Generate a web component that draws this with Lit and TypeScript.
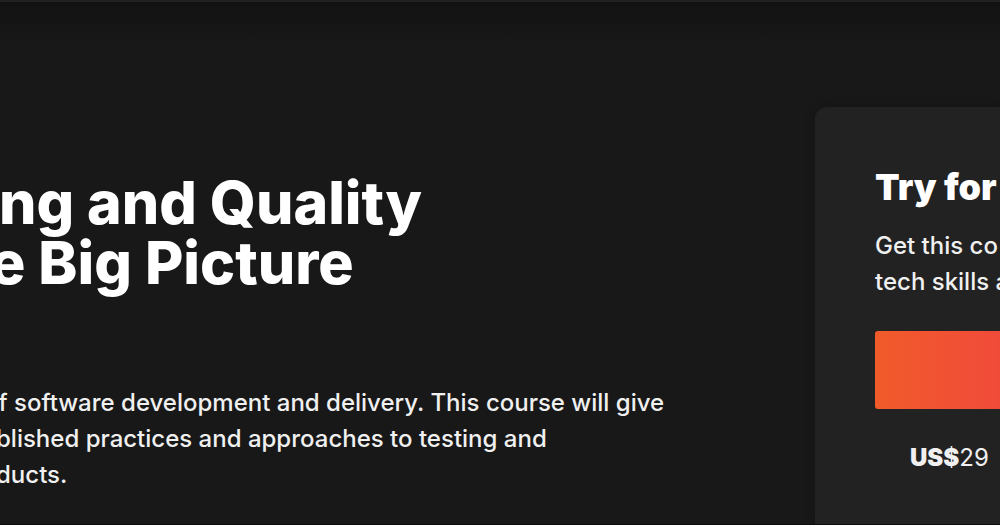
import { LitElement, html, css } from "lit";
import { customElement } from "lit/decorators.js";

@customElement("app-root")
export class AppRoot extends LitElement {
  static styles = css`
    :host {
      display: block;
      color: #f0f0f0;
      background: #181818;
      font-family: Inter, "Liberation Sans", sans-serif;
    }
    .page {
      box-sizing: border-box;
      min-height: 100vh;
      display: flex;
      justify-content: space-between;
      overflow: hidden;
      border-top: 2px solid #222;
      border-bottom: 1px solid #0c0c0c;
      background: linear-gradient(#121212, #181818 40px);
    }
    .intro {
      padding-top: 171px;
      white-space: nowrap;
    }
    h1 {
      margin: 0 0 92px -10px;
      color: #fff;
      font-size: 59px;
      line-height: 60px;
      font-weight: 800;
      text-indent: 9px;
    }
    p {
      margin: 0;
      font-size: 24px;
      line-height: 36px;
      font-weight: 500;
    }
    .summary {
      margin-left: -4px;
      text-indent: -12px;
    }
    .card {
      box-sizing: border-box;
      flex: 0 0 185px;
      min-width: 0;
      margin-top: 105px;
      padding: 60px 0 0 60px;
      border-top-left-radius: 12px;
      background: #222;
      box-shadow: 0 0 8px #141414;
      white-space: nowrap;
    }
    h2 {
      margin: 0 0 21px;
      color: #fff;
      font-size: 36px;
      line-height: 40px;
      font-weight: 900;
    }
    .cta {
      display: block;
      width: 100%;
      height: 78px;
      margin: 31px 0;
      padding: 0;
      border: 0;
      border-radius: 3px 0 0 3px;
      background: linear-gradient(90deg, #f15b2a, #f04b3a);
    }
    .price {
      padding-left: 35px;
      font-weight: 400;
    }
    .price b {
      font-weight: 900;
    }
  `;

  render() {
    return html`
      <main class="page">
        <section class="intro">
          <h1>ng and Quality<br />e Big Picture</h1>
          <p class="summary">
            of software development and delivery. This course will give<br />
            blished practices and approaches to testing and<br />
            ducts.
          </p>
        </section>
        <aside class="card">
          <h2>Try for</h2>
          <p>Get this co<br />tech skills a</p>
          <button class="cta" type="button"></button>
          <p class="price"><b>US$</b>29</p>
        </aside>
      </main>
    `;
  }
}
